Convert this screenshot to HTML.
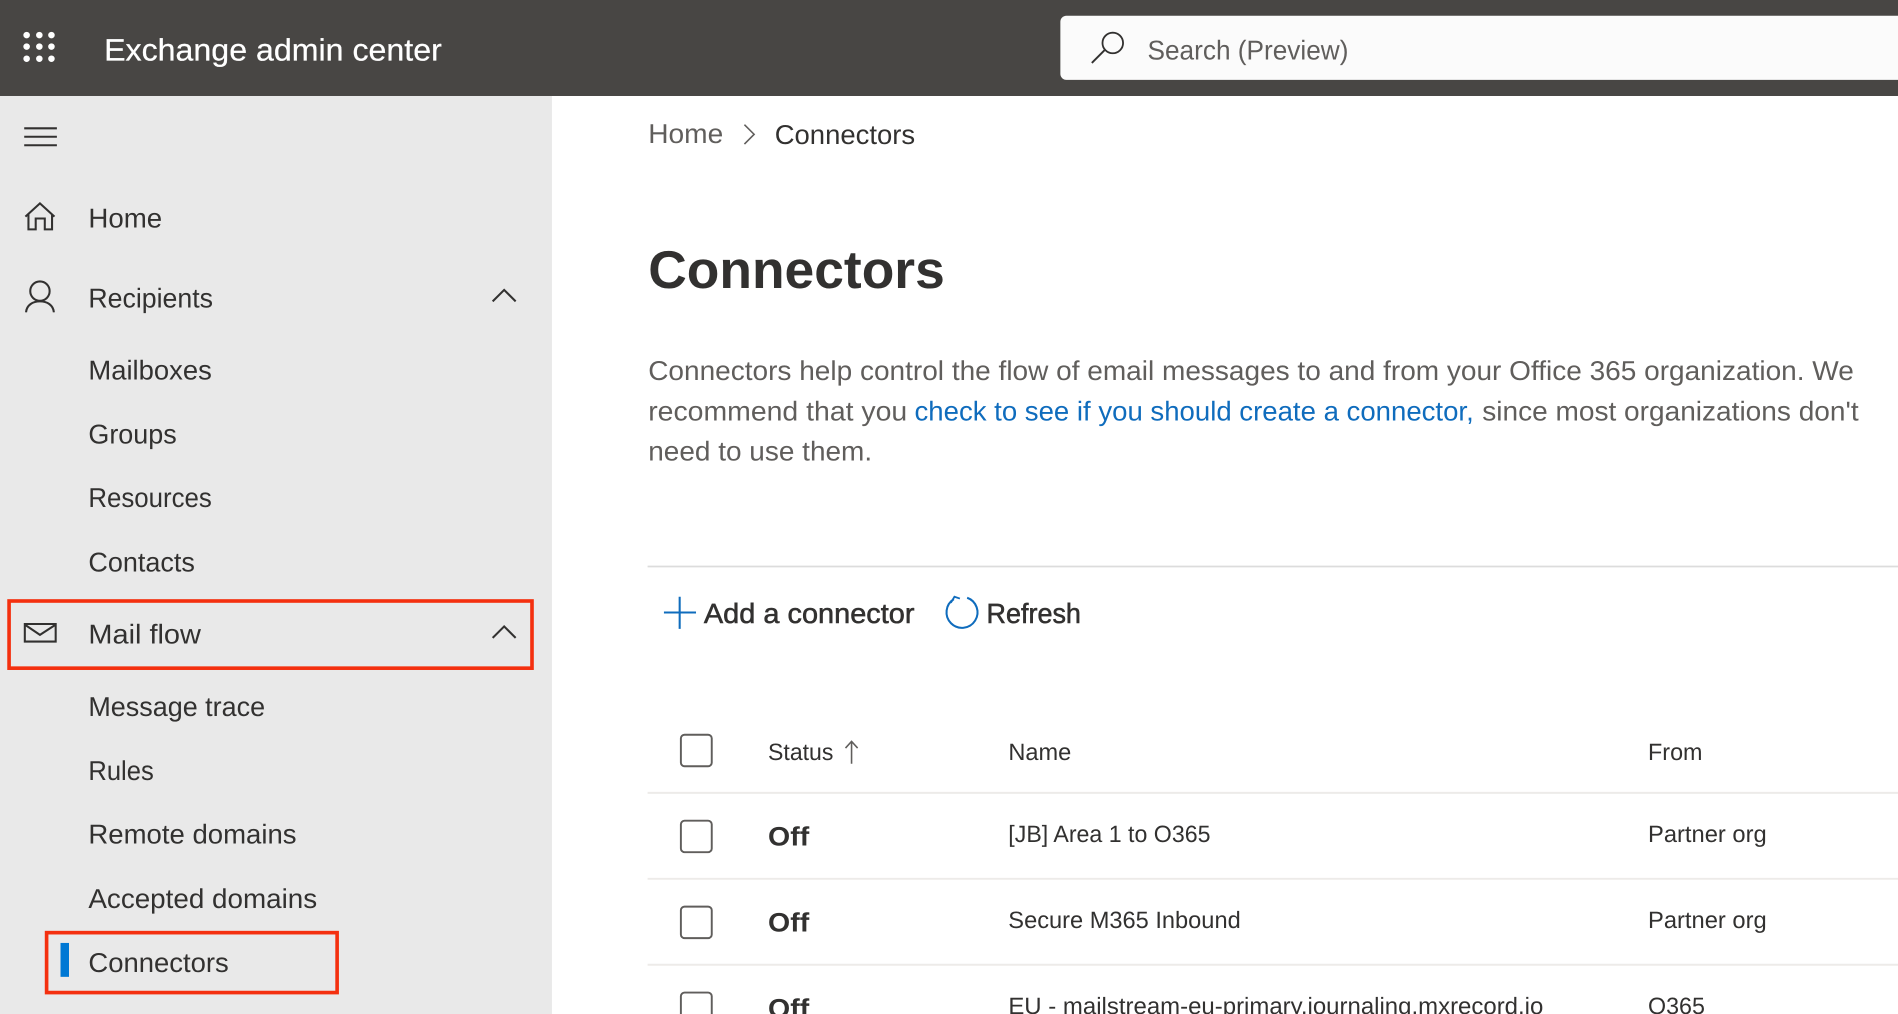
<!DOCTYPE html>
<html lang="en"><head><meta charset="utf-8"><title>Exchange admin center</title>
<style>
html,body{margin:0;padding:0;width:1898px;height:1014px;overflow:hidden;background:#fff}
svg{display:block;filter:blur(.3px)}
text{font-family:"Liberation Sans",sans-serif;fill:#323130;text-rendering:geometricPrecision}
.n{font-size:22.5px}
.p{font-size:22.5px;fill:#605e5c}
.t{font-size:19.5px}
.o{font-size:22px;font-weight:bold}
.b{font-size:23px;stroke:#323130;stroke-width:.45}
.i{fill:none;stroke:#323130;stroke-width:1.7}
.c{fill:#fff;stroke:#605e5c;stroke-width:1.6}
.l{stroke:#edebe9;stroke-width:1.6}
</style></head><body>
<svg width="1898" height="1014" viewBox="0 0 1568 837.7" xmlns="http://www.w3.org/2000/svg">
<rect width="1568" height="838" fill="#fff"/>
<rect width="1568" height="79.300" fill="#484644"/>
<rect y="79.300" width="456" height="759" fill="#e9e9e9"/>
<g fill="#fff"><circle cx="22" cy="29" r="2.7"/><circle cx="32.5" cy="29" r="2.7"/><circle cx="42.5" cy="29" r="2.7"/><circle cx="22" cy="38.5" r="2.7"/><circle cx="32.5" cy="38.5" r="2.7"/><circle cx="42.5" cy="38.5" r="2.7"/><circle cx="22" cy="48.5" r="2.7"/><circle cx="32.5" cy="48.5" r="2.7"/><circle cx="42.5" cy="48.5" r="2.7"/></g>
<text x="86" y="50" textLength="279" lengthAdjust="spacingAndGlyphs" style="font-size:25.5px;fill:#fff;stroke:#fff;stroke-width:.2">Exchange admin center</text>
<rect x="876" y="13" width="720" height="53" rx="5" fill="#fbfbfb"/>
<circle cx="919.300" cy="35.500" r="8.500" fill="none" stroke="#323130" stroke-width="1.5"/><path d="M912.500 41.500 902 52" stroke="#323130" stroke-width="1.6" fill="none"/>
<text x="948" y="49" textLength="166" lengthAdjust="spacingAndGlyphs" class="p">Search (Preview)</text>

<path class="i" d="M20 106H47M20 113H47M20 120H47"/>
<path class="i" d="M21 179 33 168 45 179M23.500 177V189.500H29.500V180.500H37V189.500H43V177"/>
<circle class="i" cx="33" cy="240.500" r="8"/><path class="i" d="M21.500 258C22 252 27 249 33 249S44 252 44.500 258"/>
<path class="i" d="M407 249 416.500 239.500 426 249"/>
<path class="i" d="M407 527 416.500 517.500 426 527"/>
<path class="i" d="M20.500 515.500H46V530H20.500ZM20.500 516 33 524.500 46 516"/>

<text x="73" y="188" textLength="61" lengthAdjust="spacingAndGlyphs" class="n">Home</text>
<text x="73" y="254" textLength="103" lengthAdjust="spacingAndGlyphs" class="n">Recipients</text>
<text x="73" y="313.500" textLength="102" lengthAdjust="spacingAndGlyphs" class="n">Mailboxes</text>
<text x="73" y="366.500" textLength="73" lengthAdjust="spacingAndGlyphs" class="n">Groups</text>
<text x="73" y="419" textLength="102" lengthAdjust="spacingAndGlyphs" class="n">Resources</text>
<text x="73" y="472" textLength="88" lengthAdjust="spacingAndGlyphs" class="n">Contacts</text>
<text x="73" y="531.500" textLength="93" lengthAdjust="spacingAndGlyphs" class="n">Mail flow</text>
<text x="73" y="591.500" textLength="146" lengthAdjust="spacingAndGlyphs" class="n">Message trace</text>
<text x="73" y="644.500" textLength="54" lengthAdjust="spacingAndGlyphs" class="n">Rules</text>
<text x="73" y="697" textLength="172" lengthAdjust="spacingAndGlyphs" class="n">Remote domains</text>
<text x="73" y="750" textLength="189" lengthAdjust="spacingAndGlyphs" class="n">Accepted domains</text>
<text x="73" y="803" textLength="116" lengthAdjust="spacingAndGlyphs" class="n">Connectors</text>
<rect x="50" y="779" width="7" height="28" fill="#0078d4"/>
<rect x="7.500" y="496.500" width="432" height="55.500" fill="none" stroke="#f4300f" stroke-width="3"/>
<rect x="38.500" y="770.500" width="240" height="49.500" fill="none" stroke="#f4300f" stroke-width="3"/>

<text x="535.500" y="118" textLength="62" lengthAdjust="spacingAndGlyphs" class="p">Home</text>
<path d="M615 103 623 111 615 119" fill="none" stroke="#605e5c" stroke-width="1.300"/>
<text x="640" y="119" textLength="116" lengthAdjust="spacingAndGlyphs" class="n">Connectors</text>
<text x="535.500" y="238" textLength="245" lengthAdjust="spacingAndGlyphs" style="font-size:44px;font-weight:bold">Connectors</text>

<text x="535.500" y="314" textLength="996" lengthAdjust="spacingAndGlyphs" class="p">Connectors help control the flow of email messages to and from your Office 365 organization. We</text>
<text x="535.500" y="347.500" textLength="214" lengthAdjust="spacingAndGlyphs" class="p">recommend that you</text>
<text x="755.500" y="347.500" textLength="462" lengthAdjust="spacingAndGlyphs" style="font-size:22.5px;fill:#0f6cbd">check to see if you should create a connector,</text>
<text x="1224.500" y="347.500" textLength="311" lengthAdjust="spacingAndGlyphs" class="p">since most organizations don't</text>
<text x="535.500" y="380.500" textLength="185" lengthAdjust="spacingAndGlyphs" class="p">need to use them.</text>

<line x1="535" y1="468" x2="1568" y2="468" stroke="#dcdcdc" stroke-width="1.500"/>
<path d="M561.500 493V519.500M548.500 506H575" stroke="#0f6cbd" stroke-width="1.700" fill="none"/>
<text x="581.500" y="514.500" textLength="174" lengthAdjust="spacingAndGlyphs" class="b">Add a connector</text>
<path d="M799 493.800A12.800 12.800 0 1 1 788 495" fill="none" stroke="#0f6cbd" stroke-width="1.700"/>
<path d="M785.500 498 788.500 493 793 494.500" fill="none" stroke="#0f6cbd" stroke-width="1.500"/>
<text x="815" y="514.500" textLength="78" lengthAdjust="spacingAndGlyphs" class="b">Refresh</text>

<rect class="c" x="562.500" y="607" width="25.500" height="26" rx="3"/>
<text x="634.500" y="628" textLength="54" lengthAdjust="spacingAndGlyphs" class="t">Status</text>
<path d="M703.500 613V631M698.500 618 703.500 612.500 708.500 618" fill="none" stroke="#605e5c" stroke-width="1.300"/>
<text x="833" y="628" textLength="52" lengthAdjust="spacingAndGlyphs" class="t">Name</text>
<text x="1361.500" y="628" textLength="45" lengthAdjust="spacingAndGlyphs" class="t">From</text>
<line class="l" x1="535" y1="655" x2="1568" y2="655"/>

<rect class="c" x="562.500" y="678" width="25.500" height="26" rx="3"/>
<text x="634.500" y="698.500" textLength="34" lengthAdjust="spacingAndGlyphs" class="o">Off</text>
<text x="833" y="695.500" textLength="167" lengthAdjust="spacingAndGlyphs" class="t">[JB] Area 1 to O365</text>
<text x="1361.500" y="695.500" textLength="98" lengthAdjust="spacingAndGlyphs" class="t">Partner org</text>
<line class="l" x1="535" y1="726" x2="1568" y2="726"/>

<rect class="c" x="562.500" y="749" width="25.500" height="26" rx="3"/>
<text x="634.500" y="769.500" textLength="34" lengthAdjust="spacingAndGlyphs" class="o">Off</text>
<text x="833" y="766.500" textLength="192" lengthAdjust="spacingAndGlyphs" class="t">Secure M365 Inbound</text>
<text x="1361.500" y="766.500" textLength="98" lengthAdjust="spacingAndGlyphs" class="t">Partner org</text>
<line class="l" x1="535" y1="797" x2="1568" y2="797"/>

<rect class="c" x="562.500" y="820" width="25.500" height="26" rx="3"/>
<text x="634.500" y="840.500" textLength="34" lengthAdjust="spacingAndGlyphs" class="o">Off</text>
<text x="833" y="837.500" textLength="442" lengthAdjust="spacingAndGlyphs" class="t">EU - mailstream-eu-primary.journaling.mxrecord.io</text>
<text x="1361.500" y="837.500" textLength="47" lengthAdjust="spacingAndGlyphs" class="t">O365</text>
</svg>
</body></html>
